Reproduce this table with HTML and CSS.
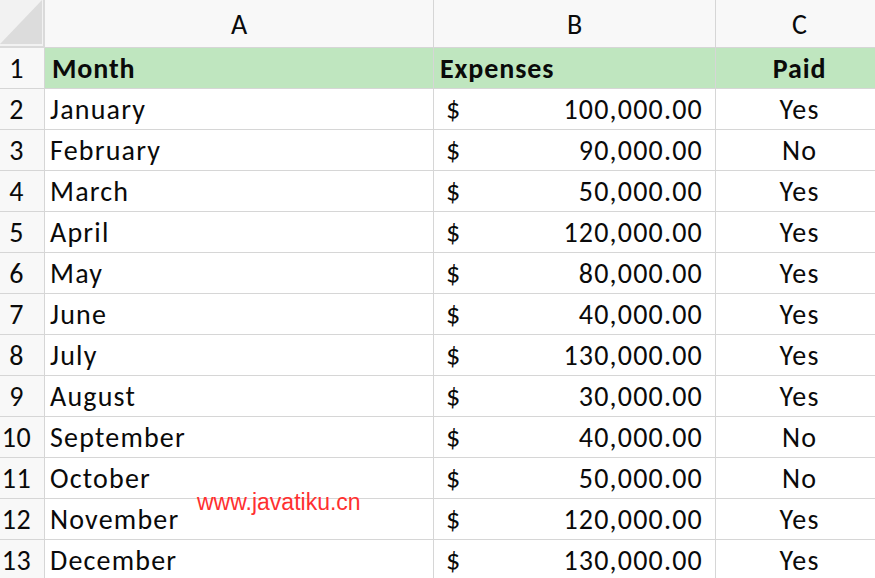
FILE: index.html
```html
<!DOCTYPE html>
<html>
<head>
<meta charset="utf-8">
<link rel="stylesheet" href="styles.css">
</head>
<body>
<div class="sheet">
  <div class="corner"><div class="tri"></div></div>
  <div class="colhead">A</div>
  <div class="colhead">B</div>
  <div class="colhead">C</div>

  <div class="rowhead">1</div>
  <div class="cell head a">Month</div>
  <div class="cell head b">Expenses</div>
  <div class="cell head c">Paid</div>

  <div class="rowhead">2</div><div class="cell a">January</div><div class="cell b"><span>$</span><span>100,000.00</span></div><div class="cell c">Yes</div>
  <div class="rowhead">3</div><div class="cell a">February</div><div class="cell b"><span>$</span><span>90,000.00</span></div><div class="cell c">No</div>
  <div class="rowhead">4</div><div class="cell a">March</div><div class="cell b"><span>$</span><span>50,000.00</span></div><div class="cell c">Yes</div>
  <div class="rowhead">5</div><div class="cell a">April</div><div class="cell b"><span>$</span><span>120,000.00</span></div><div class="cell c">Yes</div>
  <div class="rowhead">6</div><div class="cell a">May</div><div class="cell b"><span>$</span><span>80,000.00</span></div><div class="cell c">Yes</div>
  <div class="rowhead">7</div><div class="cell a">June</div><div class="cell b"><span>$</span><span>40,000.00</span></div><div class="cell c">Yes</div>
  <div class="rowhead">8</div><div class="cell a">July</div><div class="cell b"><span>$</span><span>130,000.00</span></div><div class="cell c">Yes</div>
  <div class="rowhead">9</div><div class="cell a">August</div><div class="cell b"><span>$</span><span>30,000.00</span></div><div class="cell c">Yes</div>
  <div class="rowhead">10</div><div class="cell a">September</div><div class="cell b"><span>$</span><span>40,000.00</span></div><div class="cell c">No</div>
  <div class="rowhead">11</div><div class="cell a">October</div><div class="cell b"><span>$</span><span>50,000.00</span></div><div class="cell c">No</div>
  <div class="rowhead">12</div><div class="cell a">November</div><div class="cell b"><span>$</span><span>120,000.00</span></div><div class="cell c">Yes</div>
  <div class="rowhead">13</div><div class="cell a">December</div><div class="cell b"><span>$</span><span>130,000.00</span></div><div class="cell c">Yes</div>
</div>
<div class="watermark">www.javatiku.cn</div>
</body>
</html>
```
FILE: styles.css
```css
html, body {
  margin: 0;
  padding: 0;
  background: #ffffff;
  overflow: hidden;
}
body {
  position: relative;
  width: 875px;
  height: 578px;
  font-family: "Carlito", "Lato", sans-serif;
  color: #0a0a0a;
}
.sheet {
  display: grid;
  grid-template-columns: 45px 389px 282px 168px;
  grid-template-rows: 48px repeat(13, 41px);
  width: 884px;
}
.sheet > div {
  box-sizing: border-box;
  border-right: 1px solid #d6d6d6;
  border-bottom: 1px solid #d6d6d6;
  display: flex;
  align-items: center;
  font-size: 28px;
  letter-spacing: 1.2px;
  white-space: nowrap;
  overflow: hidden;
}
.corner {
  background: #f2f2f2;
  position: relative;
  border-right: 2px solid #dadada !important;
  border-bottom: 2px solid #dadada !important;
}
.tri {
  position: absolute;
  left: 0;
  top: 0;
  width: 42px;
  height: 44px;
  background: #dcdcdc;
  clip-path: polygon(100% 0, 100% 100%, 0 100%);
}
.sheet > .colhead {
  background: #f8f8f8;
  justify-content: center;
  padding-top: 1px;
  font-size: 28px;
  letter-spacing: 0;
}
.sheet > .rowhead {
  background: #f8f8f8;
  justify-content: center;
  padding-right: 11px;
  letter-spacing: 0.5px;
}
.cell.head {
  background: #bfe6bf;
  font-weight: bold;
  letter-spacing: 0.9px;
}
.cell.a {
  padding-left: 5px;
}
.cell.head.a {
  padding-left: 7px;
}
.cell.b {
  justify-content: space-between;
  padding-left: 12px;
  padding-right: 12px;
}
.cell.head.b {
  padding-left: 6px;
}
.cell.c {
  justify-content: center;
}
.watermark {
  position: absolute;
  left: 197px;
  top: 489px;
  font-family: "Liberation Sans", Arial, sans-serif;
  font-size: 23px;
  color: #ff3030;
}
```
